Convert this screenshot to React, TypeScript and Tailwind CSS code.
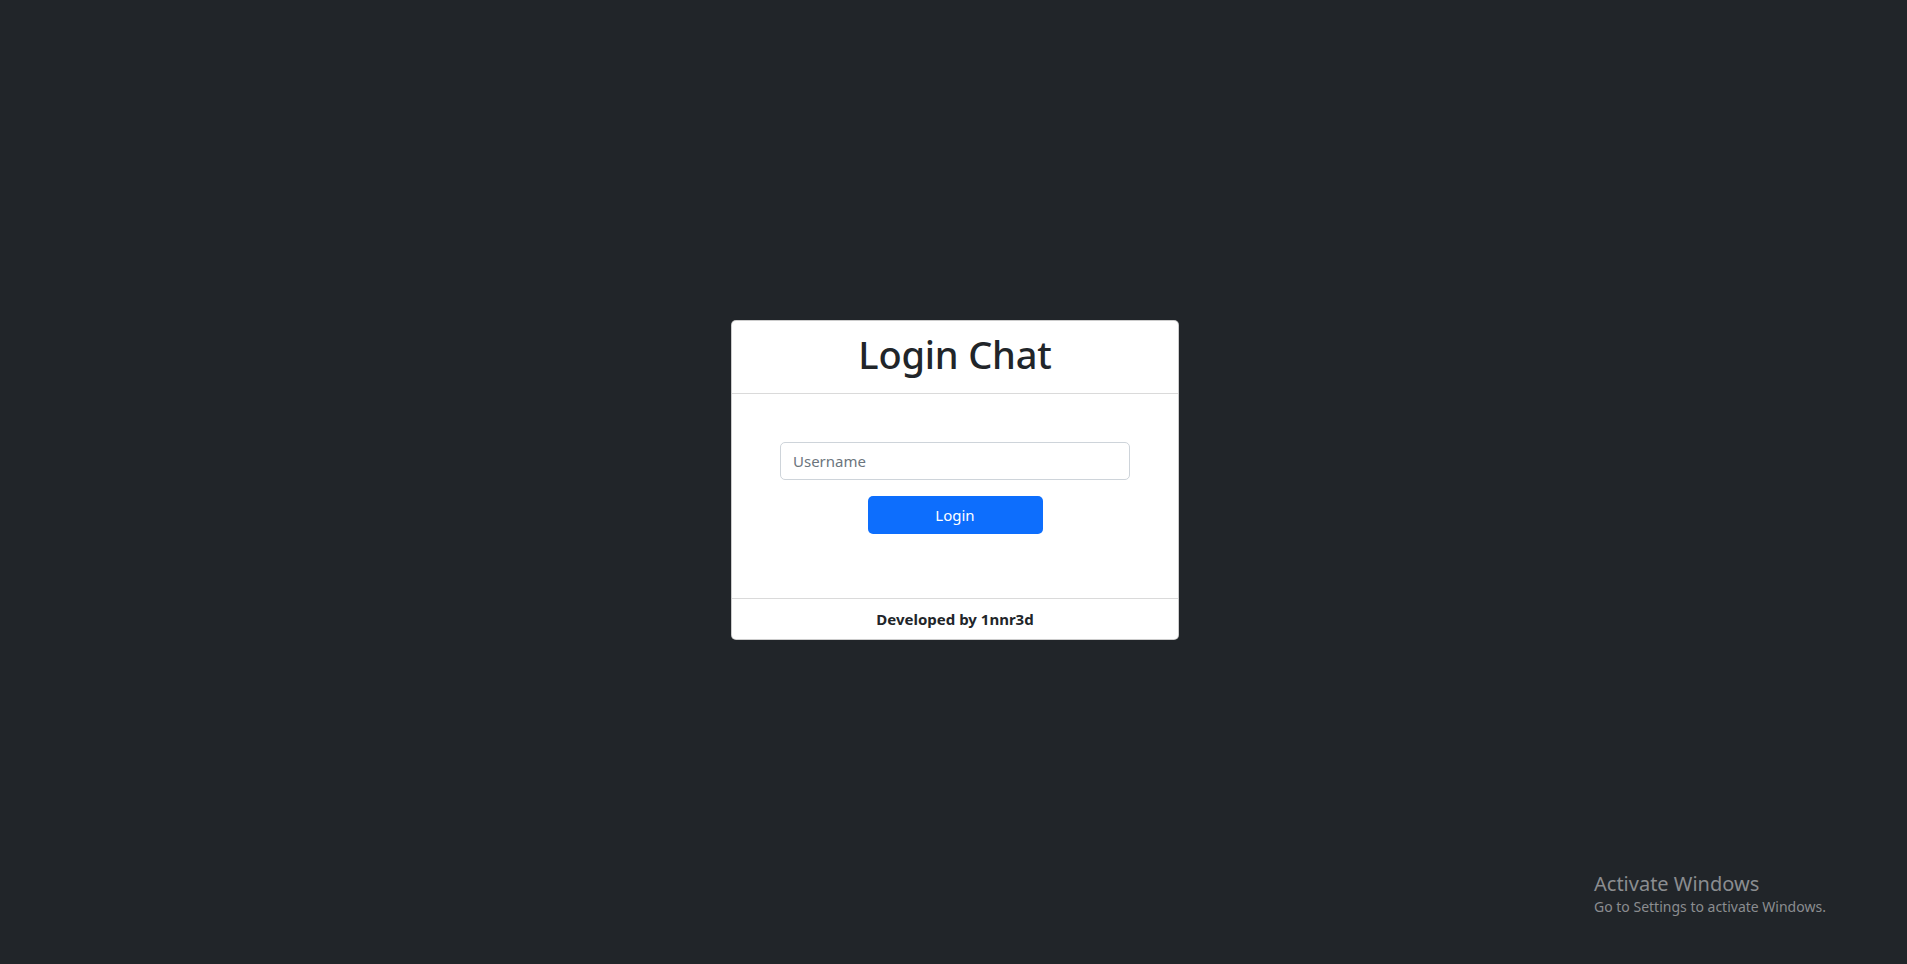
import React, { useState } from 'react';

export default function App() {
  const [username, setUsername] = useState('');

  return (
    <div
      className="relative min-h-screen w-full bg-[#212529] flex items-center justify-center"
      style={{ fontFamily: '"Noto Sans", "Open Sans", sans-serif' }}
    >
      {/* Login card */}
      <div className="w-[448px] bg-white rounded-[5px] border border-black/20 flex flex-col text-[#212529] -mt-[4px] ml-[3px]">
        <div className="px-4 pt-[9px] pb-[7px] border-b border-[#dadada] text-center">
          <h1 className="text-[38px] leading-[48px] font-medium mb-2 tracking-[-0.2px]">Login Chat</h1>
        </div>

        <div className="pt-[48px] pb-[64px] flex flex-col items-center gap-4">
          <input
            type="text"
            value={username}
            onChange={(e) => setUsername(e.target.value)}
            placeholder="Username"
            className="w-[350px] h-[38px] px-3 text-[15px] rounded-[5px] border border-[#ced4da] placeholder:text-[#6c757d] outline-none"
          />
          <button className="w-[175px] h-[38px] rounded-[5px] bg-[#0d6efd] text-white text-[15px]">
            Login
          </button>
        </div>

        <div className="px-4 py-2 border-t border-[#dadada] text-center">
          <span className="text-[15px] leading-6 font-bold">Developed by 1nnr3d</span>
        </div>
      </div>

      {/* Windows watermark */}
      <div className="absolute left-[1594px] top-[871px] text-[#8b8d90] leading-tight">
        <div className="text-[20px]">Activate Windows</div>
        <div className="text-[14px] mt-[2px]">Go to Settings to activate Windows.</div>
      </div>
    </div>
  );
}
